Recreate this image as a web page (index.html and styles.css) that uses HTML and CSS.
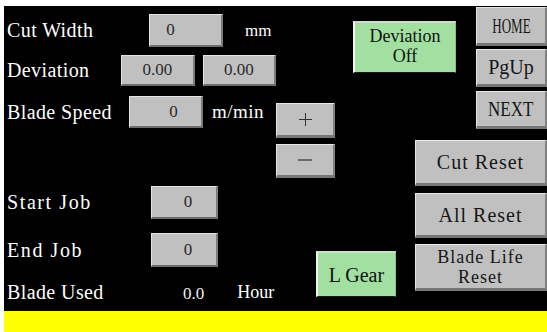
FILE: index.html
```html
<!DOCTYPE html>
<html lang="en">
<head>
    <meta charset="UTF-8">
    <meta name="viewport" content="width=device-width, initial-scale=1.0">
    <title>Cutter Panel</title>
    <link rel="stylesheet" href="styles.css">
</head>
<body>
    <div class="screen">
        <div class="left">
            <div class="row row-cut">
                <div class="label">Cut Width</div>
                <div class="field pad-cut">0</div>
                <span class="unit unit-mm">mm</span>
            </div>
            <div class="row row-dev">
                <div class="label">Deviation</div>
                <div class="field">0.00</div>
                <div class="field field-second">0.00</div>
            </div>
            <div class="row row-speed">
                <div class="label">Blade Speed</div>
                <div class="field pad-speed">0</div>
                <span class="unit unit-speed">m/min</span>
            </div>
            <div class="row row-start">
                <div class="label">Start Job</div>
                <div class="field field-job">0</div>
            </div>
            <div class="row row-end">
                <div class="label">End Job</div>
                <div class="field field-job">0</div>
            </div>
            <div class="row row-used">
                <div class="label">Blade Used</div>
                <span class="value">0.0</span>
                <span class="unit unit-hour">Hour</span>
            </div>
        </div>

        <div class="green dev-off"><span class="txt two-line">Deviation<br>Off</span></div>

        <div class="adjust">
            <div class="btn btn-plus">
                <svg width="13" height="13" viewBox="0 0 13 13"><path d="M0 6.5H13M6.5 0V13" stroke="#333" stroke-width="1"/></svg>
            </div>
            <div class="btn btn-minus">
                <svg width="14" height="4" viewBox="0 0 14 4"><path d="M0 2H14" stroke="#6a6a6a" stroke-width="2"/></svg>
            </div>
        </div>

        <div class="nav">
            <div class="btn nav-home"><span class="txt cond-home">HOME</span></div>
            <div class="btn nav-up"><span class="txt">PgUp</span></div>
            <div class="btn nav-next"><span class="txt cond-next">NEXT</span></div>
        </div>

        <div class="resets">
            <div class="btn reset-cut"><span class="txt wide">Cut Reset</span></div>
            <div class="btn reset-all"><span class="txt wide">All Reset</span></div>
            <div class="btn reset-blade"><span class="txt wide two-line">Blade Life<br>Reset</span></div>
        </div>

        <div class="green gear"><span class="txt">L Gear</span></div>

        <div class="status"></div>
    </div>
</body>
</html>
```

FILE: styles.css
```css
html, body {
    margin: 0;
    padding: 0;
    background-color: #fff;
    overflow: hidden;
}
.screen {
    margin: 6px 0 0 4px;
    width: 543px;
    height: 326px;
    background-color: #000;
    display: grid;
    grid-template-columns: 272px 40px 37px 62px 61px 71px;
    grid-template-rows: 134px 171px 21px;
    overflow: hidden;
    font-family: "Liberation Serif", serif;
}
.txt {
    font-size: 20px;
    line-height: 22px;
    display: inline-block;
    white-space: nowrap;
    text-align: center;
}
.two-line {
    font-size: 18px;
    line-height: 20px;
}
.wide {
    letter-spacing: 1px;
}
.cond-home {
    transform: scaleX(0.65);
}
.cond-next {
    transform: scaleX(0.85);
}

/* left column */
.left {
    grid-column: 1;
    grid-row: 1 / span 2;
    padding: 8px 0 0 3px;
    display: flex;
    flex-direction: column;
}
.row {
    display: flex;
    align-items: center;
    height: 33px;
    color: #fff;
}
.label {
    flex: none;
    white-space: nowrap;
    font-size: 20px;
    letter-spacing: 0.4px;
}
.row-cut .label { width: 142px; }
.row-dev { margin-top: 8px; height: 31px; }
.row-dev .label { width: 114px; }
.row-speed { margin-top: 10px; height: 32px; }
.row-speed .label { width: 122px; }
.row-start { margin-top: 58px; }
.row-start .label, .row-end .label { width: 144px; letter-spacing: 1.6px; }
.row-end { margin-top: 14px; height: 34px; }
.row-used { margin-top: 10px; height: 30px; }
.row-used .label { width: 176px; }

.field {
    box-sizing: border-box;
    width: 74px;
    height: 100%;
    background-color: #c0c0c0;
    border-style: solid;
    border-width: 1px 2px 2px 1px;
    border-color: #e4e4e4 #7c7c7c #6c6c6c #e4e4e4;
    display: flex;
    align-items: center;
    justify-content: center;
    color: #2a2a2a;
    font-size: 17px;
}
.field-second { margin-left: 8px; }
.pad-cut { padding-right: 30px; }
.pad-speed { padding-left: 16px; }
.field-job { width: 67px; padding-left: 8px; }

.unit {
    color: #fff;
    font-size: 17px;
}
.unit-mm { margin-left: 22px; }
.unit-speed { margin-left: 9px; font-size: 19px; letter-spacing: 0.5px; }
.value {
    font-size: 17px;
    color: #eee;
    margin-top: 4px;
}
.unit-hour { margin-left: 33px; font-size: 18px; }

/* buttons */
.btn {
    box-sizing: border-box;
    background-color: #c0c0c0;
    border-style: solid;
    border-width: 1px 2px 3px 1px;
    border-color: #e8e8e8 #808080 #777 #e8e8e8;
    display: flex;
    align-items: center;
    justify-content: center;
    color: #161616;
}
.green {
    box-sizing: border-box;
    background-color: #a2e0a2;
    border-style: solid;
    border-width: 2px 1px 1px 2px;
    border-color: #d6d6d6 #90c090 #1a1a1a #f4f4f4;
    display: flex;
    align-items: center;
    justify-content: center;
    color: #111;
}
.dev-off {
    grid-column: 4 / span 2;
    grid-row: 1;
    align-self: start;
    width: 103px;
    height: 52px;
    margin-top: 15px;
    padding-bottom: 4px;
}
.adjust {
    grid-column: 2 / span 2;
    grid-row: 1 / span 2;
    align-self: start;
    margin-top: 97px;
    width: 59px;
    display: flex;
    flex-direction: column;
    gap: 6px;
}
.btn-plus { height: 35px; }
.btn-minus { height: 34px; }

.nav {
    grid-column: 6;
    grid-row: 1;
    margin-top: 1px;
    display: flex;
    flex-direction: column;
}
.nav-home { height: 39px; }
.nav-up { height: 38px; margin-top: 3px; }
.nav-next { height: 38px; margin-top: 4px; }

.resets {
    grid-column: 5 / span 2;
    grid-row: 2;
    display: flex;
    flex-direction: column;
}
.reset-cut { height: 46px; }
.reset-all { height: 45px; margin-top: 7px; }
.reset-blade { height: 47px; margin-top: 6px; }

.gear {
    grid-column: 3 / span 2;
    grid-row: 2;
    align-self: start;
    width: 80px;
    height: 46px;
    margin-top: 111px;
}

.status {
    grid-column: 1 / -1;
    grid-row: 3;
    background-color: #ffff00;
}
```
